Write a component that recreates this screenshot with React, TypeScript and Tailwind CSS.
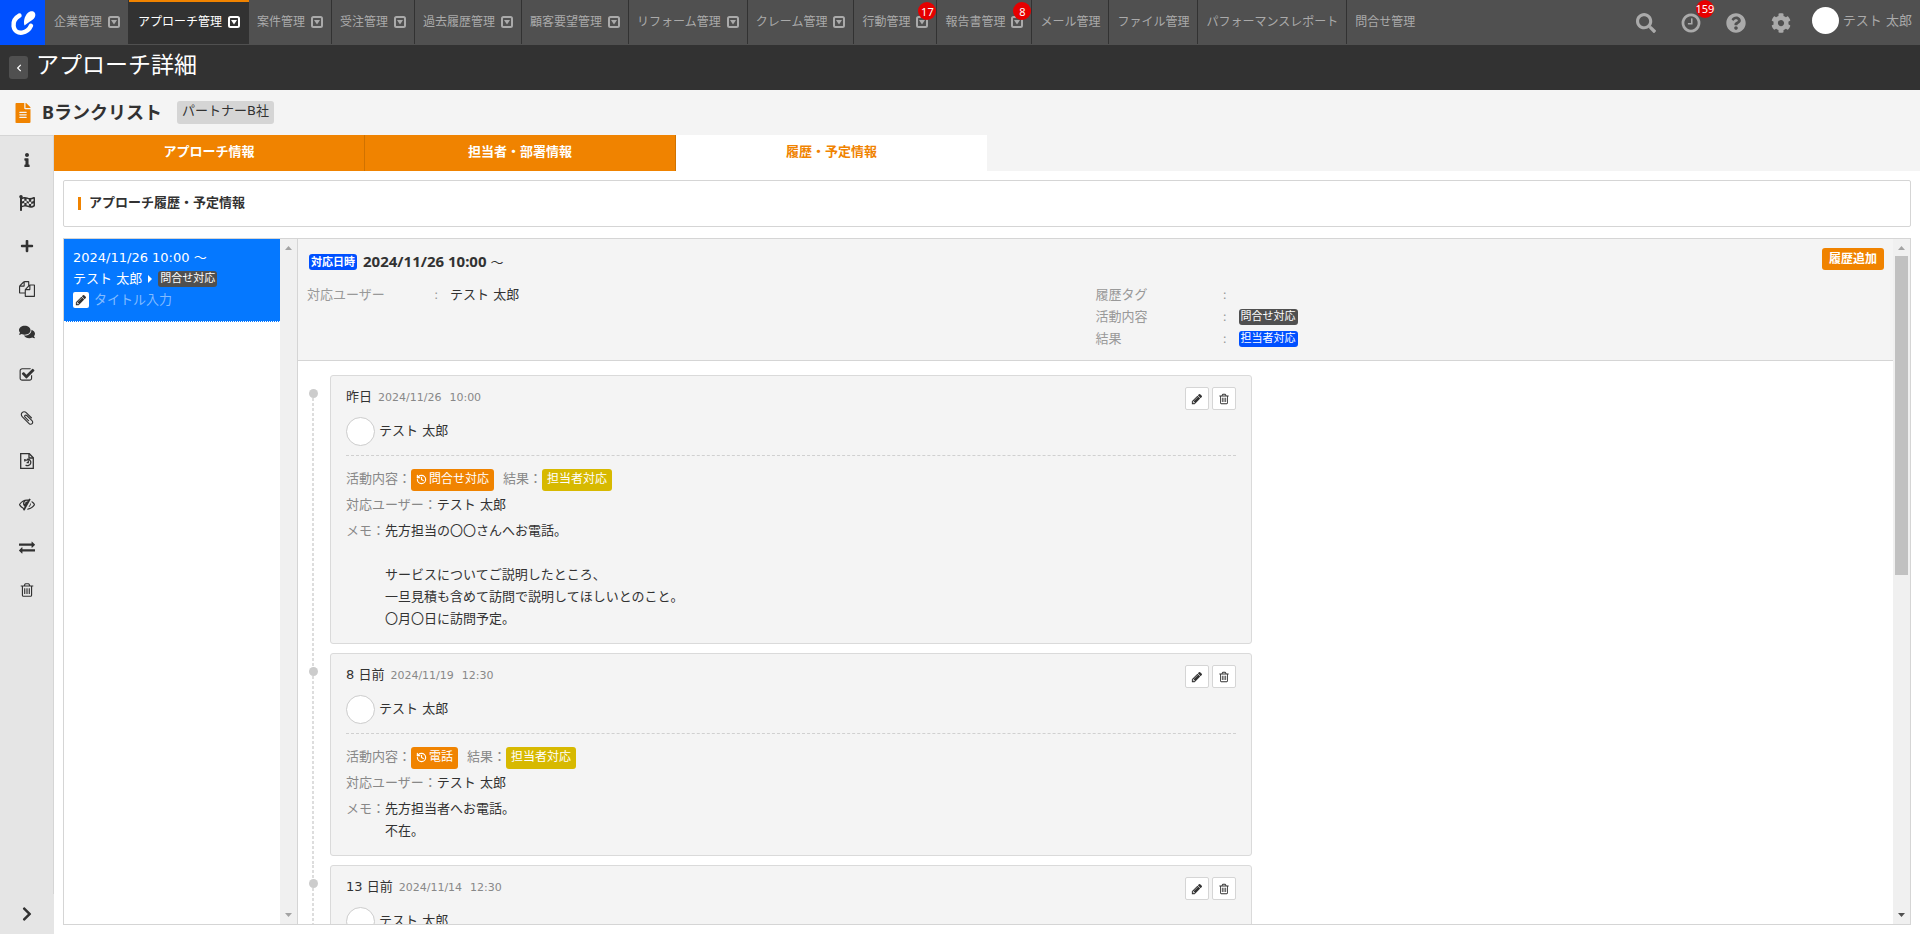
import type { ReactNode } from 'react';
import { History } from 'lucide-react';
import {
  FaChevronLeft,
  FaChevronRight,
  FaCog,
  FaComments,
  FaFileAlt,
  FaFlagCheckered,
  FaInfo,
  FaPlus,
  FaQuestionCircle,
  FaSearch,
} from 'react-icons/fa';

const paths = {
  trash:
    'M704 736v576q0 14-9 23t-23 9h-64q-14 0-23-9t-9-23v-576q0-14 9-23t23-9h64q14 0 23 9t9 23zm256 0v576q0 14-9 23t-23 9h-64q-14 0-23-9t-9-23v-576q0-14 9-23t23-9h64q14 0 23 9t9 23zm256 0v576q0 14-9 23t-23 9h-64q-14 0-23-9t-9-23v-576q0-14 9-23t23-9h64q14 0 23 9t9 23zm128 724v-948h-896v948q0 22 7 40.5t14.5 27 10.5 8.5h832q3 0 10.5-8.5t14.5-27 7-40.5zm-672-1076h448l-48-117q-7-9-17-11h-317q-10 2-17 11zm928 32v64q0 14-9 23t-23 9h-96v948q0 83-47 143.5t-113 60.5h-832q-66 0-113-58.5t-47-141.5v-952h-96q-14 0-23-9t-9-23v-64q0-14 9-23t23-9h309l70-167q15-37 54-63t79-26h320q40 0 79 26t54 63l70 167h309q14 0 23 9t9 23z',
  pencil:
    'M491 1536l91-91-235-235-91 91v107h128v128h107zm523-928q0-22-22-22-10 0-17 7l-542 542q-7 7-7 17 0 22 22 22 10 0 17-7l542-542q7-7 7-17zm-54-192l416 416-832 832h-416v-416zm683 96q0 53-37 90l-166 166-416-416 166-165q36-38 90-38 53 0 91 38l235 234q37 39 37 91z',
  files:
    'M1696 384q40 0 68 28t28 68v1216q0 40-28 68t-68 28h-960q-40 0-68-28t-28-68v-288h-544q-40 0-68-28t-28-68v-672q0-40 20-88t48-76l408-408q28-28 76-48t88-20h416q40 0 68 28t28 68v328q68-40 128-40h416zm-544 213l-299 299h299v-299zm-640-384l-299 299h299v-299zm196 647l316-316v-416h-384v416q0 40-28 68t-68 28h-416v640h512v-256q0-40 20-88t48-76zm956 804v-1152h-384v416q0 40-28 68t-68 28h-416v640h896z',
  check:
    'M1472 930v318q0 119-84.5 203.5t-203.5 84.5h-832q-119 0-203.5-84.5t-84.5-203.5v-832q0-119 84.5-203.5t203.5-84.5h832q63 0 117 25 15 7 18 23 3 17-9 29l-49 49q-10 10-23 10-3 0-9-2-23-6-45-6h-832q-66 0-113 47t-47 113v832q0 66 47 113t113 47h832q66 0 113-47t47-113v-254q0-13 9-22l64-64q10-10 23-10 6 0 12 3 20 8 20 29zm231-489l-814 814q-24 24-57 24t-57-24l-430-430q-24-24-24-57t24-57l110-110q24-24 57-24t57 24l263 263 647-647q24-24 57-24t57 24l110 110q24 24 24 57t-24 57z',
  clip: 'M1596 1385q0 117-79 196t-196 79q-135 0-235-100l-777-776q-113-115-113-271 0-159 110-270t269-111q158 0 273 113l605 606q10 10 10 22 0 16-30.5 46.5t-46.5 30.5q-13 0-23-10l-606-607q-79-77-181-77-106 0-179 75t-73 181q0 105 76 181l776 777q63 63 145 63 64 0 106-42t42-106q0-82-63-145l-581-581q-26-24-60-24-29 0-48 19t-19 48q0 32 25 59l410 410q10 10 10 22 0 16-31 47t-47 31q-12 0-22-10l-410-410q-63-61-63-149 0-82 57-139t139-57q88 0 149 63l581 581q100 98 100 235z',
  eyeSlash:
    'M555 1335l78-141q-87-63-136-159t-49-203q0-121 61-225-229 117-381 353 167 258 427 375zm389-759q0-20-14-34t-34-14q-125 0-214.5 89.5t-89.5 214.5q0 20 14 34t34 14 34-14 14-34q0-86 61-147t147-61q20 0 34-14t14-34zm363-191q0 7-1 9-106 189-316 567t-315 566l-49 89q-10 16-28 16-12 0-134-70-16-10-16-28 0-12 44-87-143-65-263.5-173t-208.5-245q-20-31-20-69t20-69q153-235 380-371t496-136q89 0 180 17l54-97q10-16 28-16 5 0 18 6t31 15.5 33 18.5 31.5 18.5 19.5 11.5q16 10 16 27zm37 447q0 139-79 253.5t-209 164.5l280-502q8 45 8 84zm448 128q0 35-20 69-39 64-109 145-150 172-347.5 267t-419.5 95l74-132q212-18 392.5-137t301.5-307q-115-179-282-294l63-112q95 64 182.5 153t144.5 184q20 34 20 69z',
  exchange:
    'M1792 1184v192q0 13-9.5 22.5t-22.5 9.5h-1376v192q0 13-9.5 22.5t-22.5 9.5q-12 0-24-10l-319-320q-9-9-9-22 0-14 9-23l320-320q9-9 23-9 13 0 22.5 9.5t9.5 22.5v192h1376q13 0 22.5 9.5t9.5 22.5zm0-544q0 14-9 23l-320 320q-9 9-23 9-13 0-22.5-9.5t-9.5-22.5v-192h-1376q-13 0-22.5-9.5t-9.5-22.5v-192q0-13 9.5-22.5t22.5-9.5h1376v-192q0-14 9-23t23-9q12 0 24 10l319 319q9 9 9 23z',
  clock:
    'M1024 544v448q0 14-9 23t-23 9h-320q-14 0-23-9t-9-23v-64q0-14 9-23t23-9h224v-352q0-14 9-23t23-9h64q14 0 23 9t9 23zm416 352q0-148-73-273t-198-198-273-73-273 73-198 198-73 273 73 273 198 198 273 73 273-73 198-198 73-273zm224 0q0 209-103 385.5t-279.5 279.5-385.5 103-385.5-103-279.5-279.5-103-385.5 103-385.5 279.5-279.5 385.5-103 385.5 103 279.5 279.5 103 385.5z',
};

function Icon({ name, className }: { name: keyof typeof paths; className: string }) {
  return (
    <svg viewBox="0 0 1792 1792" fill="currentColor" className={className}>
      <path d={paths[name]} />
    </svg>
  );
}

function CaretSquare() {
  return (
    <svg viewBox="0 0 12 12" className="size-3 shrink-0">
      <rect x="1" y="1" width="10" height="10" rx="1.5" fill="none" stroke="currentColor" strokeWidth="2" />
      <path d="M3 4h6L6 8.5z" fill="currentColor" />
    </svg>
  );
}

function FileHistory() {
  return (
    <svg viewBox="0 0 16 16" fill="none" stroke="currentColor" strokeWidth="1.3" className="size-4">
      <path d="M1.7.7h8.6l4 4v10.6H1.7z" />
      <path d="M10 .7v4.3h4.3" />
      <path d="M5.2 7.2h3.3M5.8 6v2.6M8 6.3a3.2 3.2 0 1 1-1.4 5.6M9.3 7.6v2H7.6" />
    </svg>
  );
}

const navItems = [
  { label: '企業管理', menu: true },
  { label: 'アプローチ管理', menu: true, active: true },
  { label: '案件管理', menu: true },
  { label: '受注管理', menu: true },
  { label: '過去履歴管理', menu: true },
  { label: '顧客要望管理', menu: true },
  { label: 'リフォーム管理', menu: true },
  { label: 'クレーム管理', menu: true },
  { label: '行動管理', menu: true, count: 17 },
  { label: '報告書管理', menu: true, count: 8 },
  { label: 'メール管理' },
  { label: 'ファイル管理' },
  { label: 'パフォーマンスレポート' },
  { label: '問合せ管理' },
];

const sideItems: { label: string; icon: ReactNode }[] = [
  { label: '情報', icon: <FaInfo className="size-3.5" /> },
  { label: 'フラグ', icon: <FaFlagCheckered className="size-4" /> },
  { label: '追加', icon: <FaPlus className="size-3.5" /> },
  { label: '複製', icon: <Icon name="files" className="size-4" /> },
  { label: 'コメント', icon: <FaComments className="size-4" /> },
  { label: 'チェック', icon: <Icon name="check" className="size-4" /> },
  { label: '添付', icon: <Icon name="clip" className="size-4" /> },
  { label: 'ファイル履歴', icon: <FileHistory /> },
  { label: '非表示', icon: <Icon name="eyeSlash" className="size-4" /> },
  { label: '切替', icon: <Icon name="exchange" className="size-4" /> },
  { label: '削除', icon: <Icon name="trash" className="size-4" /> },
];

const histories = [
  {
    ago: '昨日',
    date: '2024/11/26',
    time: '10:00',
    activity: '問合せ対応',
    memo: [
      '先方担当の〇〇さんへお電話。',
      '',
      'サービスについてご説明したところ、',
      '一旦見積も含めて訪問で説明してほしいとのこと。',
      '〇月〇日に訪問予定。',
    ],
  },
  {
    ago: '8 日前',
    date: '2024/11/19',
    time: '12:30',
    activity: '電話',
    memo: ['先方担当者へお電話。', '不在。'],
  },
  {
    ago: '13 日前',
    date: '2024/11/14',
    time: '12:30',
    activity: '電話',
    memo: ['先方担当者へお電話。', '不在。'],
  },
];

function CountBadge({ children, className }: { children: ReactNode; className: string }) {
  return (
    <span
      className={`absolute flex size-[18px] items-center justify-center rounded-full bg-[#e60000] font-['Noto_Sans'] text-[11px] leading-none text-white ${className}`}
    >
      {children}
    </span>
  );
}

function GlobalNav() {
  return (
    <header className="flex h-[45px] shrink-0 bg-[#505050] text-[#aaa]">
      <a href="#home" aria-label="ホーム" className="size-[45px] shrink-0 bg-[#0050ff]">
        <svg viewBox="0 0 45 45" className="size-full">
          <path
            d="M19.5 15.5C15 18 13 22 13.6 26.2c.8 5 4.6 7 8.6 6.4 4.4-.7 7.3-3.4 8.8-6.9"
            fill="none"
            stroke="#fff"
            strokeWidth="4.4"
            strokeLinecap="round"
          />
          <path d="M24.5 25.5c-1.500-4 .3-11.500 5.500-13.900 3-1.400 6 .9 5.200 4.300-1 4-6.200 5.600-10.700 9.600z" fill="#fff" />
        </svg>
      </a>
      <nav className="flex pb-px pl-px text-xs">
        {navItems.map((item) => (
          <a
            key={item.label}
            href="#menu"
            className={`relative flex items-center gap-1.5 whitespace-nowrap border-[#323232] last:border-r-0 ${
              item.active
                ? 'border-t-2 border-t-[#f08300] bg-[#323232] px-[9px] pb-0.5 text-white'
                : 'border-r px-2'
            }`}
          >
            {item.label}
            {item.menu && <CaretSquare />}
            {item.count && <CountBadge className="right-0 top-0.5">{item.count}</CountBadge>}
          </a>
        ))}
      </nav>
      <div className="ml-auto flex items-center pr-2">
        <button aria-label="検索" className="flex w-[45px] justify-center">
          <FaSearch className="size-5" />
        </button>
        <button aria-label="履歴" className="relative flex w-[45px] justify-center">
          <Icon name="clock" className="size-[22px]" />
          <CountBadge className="-top-3 right-0">159</CountBadge>
        </button>
        <button aria-label="ヘルプ" className="flex w-[45px] justify-center">
          <FaQuestionCircle className="size-5" />
        </button>
        <button aria-label="設定" className="flex w-[45px] justify-center">
          <FaCog className="size-5" />
        </button>
        <button className="ml-2 flex items-start gap-1 pb-1 text-[13px] leading-[27px]">
          <span className="size-[27px] rounded-full bg-white" />
          テスト 太郎
        </button>
      </div>
    </header>
  );
}

function SideBar() {
  return (
    <aside className="flex w-[54px] shrink-0 flex-col bg-[#e5e5e5]">
      <div className="flex flex-1 flex-col border-r border-t border-[#d5d5d5] pt-0.5">
        {sideItems.map((item) => (
          <button key={item.label} aria-label={item.label} className="flex h-[43px] items-center justify-center">
            {item.icon}
          </button>
        ))}
      </div>
      <button aria-label="開く" className="flex h-10 items-center justify-center">
        <FaChevronRight className="size-4" />
      </button>
    </aside>
  );
}

function ScrollBar({ thumb }: { thumb?: boolean }) {
  return (
    <div aria-hidden="true" className="flex w-[17px] shrink-0 flex-col items-center bg-[#f0f0f0] text-[#a3a3a3]">
      <svg viewBox="0 0 17 17" fill="currentColor" className="size-[17px] shrink-0">
        <path d="M5 11h7L8.500 7z" />
      </svg>
      <div className="w-[13px] flex-1">{thumb && <div className="h-[49%] bg-[#c1c1c1]" />}</div>
      <svg
        viewBox="0 0 17 17"
        fill="currentColor"
        className={`size-[17px] shrink-0 ${thumb ? 'text-[#505050]' : ''}`}
      >
        <path d="M5 6h7l-3.500 4z" />
      </svg>
    </div>
  );
}

function ScheduleList() {
  return (
    <div className="flex w-[234px] shrink-0 border-r border-[#d5d5d5]">
      <div className="flex-1">
        <div className="border-b border-dotted border-white bg-[#0578ff] px-[9px] pb-[11px] pt-2 leading-[21px] text-white">
          <p>2024/11/26 10:00 ～</p>
          <div className="flex items-center">
            テスト 太郎
            <svg viewBox="0 0 4 8" className="mx-1.5 h-2 w-1">
              <path d="M0 0l4 4-4 4z" fill="#fff" />
            </svg>
            <span className="rounded-[3px] bg-[#505050] px-0.5 text-[11px] leading-4">問合せ対応</span>
          </div>
          <div className="flex items-center gap-[5px]">
            <button
              aria-label="タイトル編集"
              className="flex size-4 items-center justify-center rounded-xs bg-white text-[#323232]"
            >
              <Icon name="pencil" className="size-3" />
            </button>
            <span className="text-[#82bbff]">タイトル入力</span>
          </div>
        </div>
      </div>
      <ScrollBar />
    </div>
  );
}

function DetailRow({ label, children }: { label: string; children?: ReactNode }) {
  return (
    <div className="flex h-[22px] items-center">
      <dt className="w-[127px] text-[#999]">{label}</dt>
      <dd className="flex items-center">
        <span className="w-4 text-[#999]">:</span>
        {children}
      </dd>
    </div>
  );
}

function HistoryHeader() {
  return (
    <div className="border-b border-[#d5d5d5] bg-[#f4f4f4] pb-2.5 pt-[9px]">
      <div className="flex items-start justify-between pl-[11px] pr-[9px]">
        <h2 className="flex items-center gap-1.5 font-['Noto_Sans','Noto_Sans_CJK_JP',sans-serif] text-[15px] font-bold leading-[26px]">
          <span className="rounded-[3px] bg-[#0050ff] px-0.5 text-[11px] leading-4 text-white">対応日時</span>
          <span>
            2024/11/26 10:00 <span className="text-[13px] font-normal">～</span>
          </span>
        </h2>
        <button className="h-[22px] rounded-[3px] bg-[#f08300] px-[7px] text-xs font-bold leading-5 text-white">
          履歴追加
        </button>
      </div>
      <div className="flex pt-[9px]">
        <dl className="w-1/2 pl-[9px]">
          <DetailRow label="対応ユーザー">テスト 太郎</DetailRow>
        </dl>
        <dl className="w-1/2">
          <DetailRow label="履歴タグ" />
          <DetailRow label="活動内容">
            <span className="rounded-[3px] bg-[#505050] px-0.5 text-[11px] leading-4 text-white">問合せ対応</span>
          </DetailRow>
          <DetailRow label="結果">
            <span className="rounded-[3px] bg-[#0050ff] px-0.5 text-[11px] leading-4 text-white">担当者対応</span>
          </DetailRow>
        </dl>
      </div>
    </div>
  );
}

function HistoryCard({ history }: { history: (typeof histories)[number] }) {
  return (
    <article className="mb-[9px] w-[59%] rounded-[3px] border border-[#dadada] bg-[#f4f4f4] px-[15px] pb-[13px] pt-[11px]">
      <div className="flex h-[23px] items-start">
        <span className="leading-5">{history.ago}</span>
        <span className="ml-1.5 text-[11px] leading-[22px] text-[#888]">{history.date}</span>
        <span className="ml-2 text-[11px] leading-[22px] text-[#888]">{history.time}</span>
        <div className="ml-auto flex gap-[3px]">
          <button
            aria-label="編集"
            className="flex h-[23px] w-6 items-center justify-center rounded-xs border border-[#d5d5d5] bg-white"
          >
            <Icon name="pencil" className="size-3" />
          </button>
          <button
            aria-label="削除"
            className="flex h-[23px] w-6 items-center justify-center rounded-xs border border-[#d5d5d5] bg-white"
          >
            <Icon name="trash" className="size-3" />
          </button>
        </div>
      </div>
      <div className="mt-[7px] flex items-start gap-1 border-b border-dashed border-[#d0d0d0] pb-[9px] leading-[27px]">
        <span className="size-[29px] rounded-full border border-[#ccc] bg-white" />
        テスト 太郎
      </div>
      <div className="mt-[13px] flex h-[22px] items-start leading-5">
        <span className="text-[#888]">活動内容：</span>
        <span className="flex h-[22px] gap-0.5 rounded-[3px] bg-[#f08300] px-[5px] text-xs leading-5 text-white">
          <History strokeWidth={2.5} className="mt-[5px] size-[11px]" />
          {history.activity}
        </span>
        <span className="ml-[9px] text-[#888]">結果：</span>
        <span className="h-[22px] rounded-[3px] bg-[#d7b900] px-[5px] text-xs leading-5 text-white">担当者対応</span>
      </div>
      <p className="mt-1 leading-5">
        <span className="text-[#888]">対応ユーザー：</span>テスト 太郎
      </p>
      <div className="mt-[5px] flex leading-[22px]">
        <span className="text-[#888]">メモ：</span>
        <div>
          {history.memo.map((line, i) => (
            <p key={i} className="h-[22px]">
              {line}
            </p>
          ))}
        </div>
      </div>
    </article>
  );
}

const dashed = 'ml-[5px] w-0.5 bg-[repeating-linear-gradient(#ddd_0_3px,transparent_3px_5px)]';

function Timeline() {
  return (
    <ol className="pl-[9px] pt-3.5">
      {histories.map((history, i) => (
        <li key={history.date} className="flex">
          <div className="flex w-[23px] shrink-0 flex-col items-start">
            <div className={`h-3.5 shrink-0 ${i > 0 ? dashed : ''}`} />
            <div className="ml-0.5 size-[9px] shrink-0 rounded-full bg-[#ccc]" />
            <div className={`flex-1 ${dashed}`} />
          </div>
          <div className="flex-1">
            <HistoryCard history={history} />
          </div>
        </li>
      ))}
    </ol>
  );
}

export default function App() {
  return (
    <div
      lang="ja"
      className="flex h-screen flex-col overflow-hidden bg-white font-['DejaVu_Sans','Noto_Sans_CJK_JP',sans-serif] text-[13px] text-[#323232]"
    >
      <GlobalNav />
      <div className="flex h-[45px] shrink-0 items-start gap-2 bg-[#323232] px-[9px] text-white">
        <button
          aria-label="戻る"
          className="mt-[11px] flex h-[23px] w-[19px] items-center justify-center rounded-[3px] bg-[#505050]"
        >
          <FaChevronLeft className="size-2" />
        </button>
        <h1 className="text-[23px] leading-10">アプローチ詳細</h1>
      </div>
      <div className="flex h-[45px] shrink-0 items-center bg-[#f4f4f4] px-[13px]">
        <FaFileAlt className="size-5 text-[#f08300]" />
        <h2 className="ml-[9px] pb-0.5 font-['Noto_Sans','Noto_Sans_CJK_JP',sans-serif] text-lg font-bold leading-6">
          Bランクリスト
        </h2>
        <span className="ml-[15px] h-[23px] rounded-[3px] bg-[#d5d5d5] px-[5px] leading-5">パートナーB社</span>
      </div>
      <div className="flex min-h-0 flex-1">
        <SideBar />
        <main className="flex min-w-0 flex-1 flex-col">
          <div role="tablist" className="flex h-9 shrink-0 bg-[#f4f4f4] font-bold leading-8">
            <button role="tab" className="w-1/6 border-r border-[#d07200] bg-[#f08300] pb-0.5 text-white">
              アプローチ情報
            </button>
            <button role="tab" className="w-1/6 border-r border-[#d07200] bg-[#f08300] pb-0.5 text-white">
              担当者・部署情報
            </button>
            <button role="tab" aria-selected="true" className="w-1/6 bg-white pb-0.5 text-[#f08300]">
              履歴・予定情報
            </button>
          </div>
          <div className="flex min-h-0 flex-1 flex-col gap-[11px] p-[9px]">
            <div className="flex h-[47px] shrink-0 items-center gap-2 rounded-xs border border-[#d5d5d5] px-3.5">
              <span className="h-[13px] w-[3px] bg-[#f08300]" />
              <h3 className="pb-0.5 font-bold leading-5">アプローチ履歴・予定情報</h3>
            </div>
            <div className="flex min-h-0 flex-1 border border-[#d5d5d5]">
              <ScheduleList />
              <div className="min-w-0 flex-1 overflow-hidden">
                <HistoryHeader />
                <Timeline />
              </div>
              <ScrollBar thumb />
            </div>
          </div>
        </main>
      </div>
    </div>
  );
}
